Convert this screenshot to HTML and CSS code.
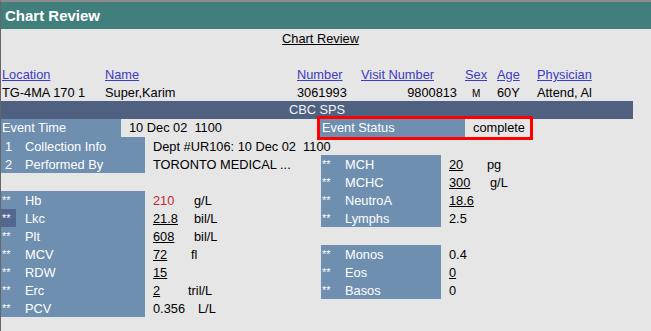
FILE: index.html
```html
<!DOCTYPE html>
<html>
<head>
<meta charset="utf-8">
<title>Chart Review</title>
<link rel="stylesheet" href="styles.css">
</head>
<body>
<div class="titlebar">Chart Review</div>
<div class="main">
  <div class="doc-row"><a class="doc-link" href="#">Chart Review</a></div>
  <div class="spacer"></div>
  <div class="patient">
    <a class="hd" href="#">Location</a>
    <a class="hd" href="#">Name</a>
    <a class="hd" href="#">Number</a>
    <a class="hd" href="#">Visit Number</a>
    <a class="hd" href="#">Sex</a>
    <a class="hd" href="#">Age</a>
    <a class="hd" href="#">Physician</a>
    <span class="pc">TG-4MA 170 1</span>
    <span class="pc">Super,Karim</span>
    <span class="pc">3061993</span>
    <span class="pc visit">9800813</span>
    <span class="pc sex"><span class="small">M</span></span>
    <span class="pc">60Y</span>
    <span class="pc">Attend, Al</span>
  </div>
  <div class="section-bar">CBC SPS</div>
  <div class="event-row">
    <div class="ev-label">Event Time</div>
    <div class="ev-value">10 Dec 02  1100</div>
    <div class="status">
      <div class="st-label">Event Status</div>
      <div class="st-value">complete</div>
    </div>
  </div>
  <div class="lab">
    <div class="lbl"><span class="mk num">1</span><span class="nm">Collection Info</span></div>
    <div class="vc span3">Dept #UR106: 10 Dec 02  1100</div>

    <div class="lbl"><span class="mk num">2</span><span class="nm">Performed By</span></div>
    <div class="vc">TORONTO MEDICAL ...</div>
    <div class="lbl"><span class="mk">**</span><span class="nm">MCH</span></div>
    <div class="vc"><span class="v v-pg u">20</span><span>pg</span></div>

    <div></div>
    <div></div>
    <div class="lbl"><span class="mk">**</span><span class="nm">MCHC</span></div>
    <div class="vc"><span class="v v-gl u">300</span><span>g/L</span></div>

    <div class="lbl"><span class="mk">**</span><span class="nm">Hb</span></div>
    <div class="vc"><span class="v v-gl hi">210</span><span>g/L</span></div>
    <div class="lbl"><span class="mk">**</span><span class="nm">NeutroA</span></div>
    <div class="vc"><span class="v u">18.6</span></div>

    <div class="lbl"><span class="mk sel">**</span><span class="nm">Lkc</span></div>
    <div class="vc"><span class="v v-gl u">21.8</span><span>bil/L</span></div>
    <div class="lbl"><span class="mk">**</span><span class="nm">Lymphs</span></div>
    <div class="vc"><span class="v">2.5</span></div>

    <div class="lbl"><span class="mk">**</span><span class="nm">Plt</span></div>
    <div class="vc"><span class="v v-gl u">608</span><span>bil/L</span></div>
    <div></div>
    <div></div>

    <div class="lbl"><span class="mk">**</span><span class="nm">MCV</span></div>
    <div class="vc"><span class="v v-fl u">72</span><span>fl</span></div>
    <div class="lbl"><span class="mk">**</span><span class="nm">Monos</span></div>
    <div class="vc"><span class="v">0.4</span></div>

    <div class="lbl"><span class="mk">**</span><span class="nm">RDW</span></div>
    <div class="vc"><span class="v u">15</span></div>
    <div class="lbl"><span class="mk">**</span><span class="nm">Eos</span></div>
    <div class="vc"><span class="v u">0</span></div>

    <div class="lbl"><span class="mk">**</span><span class="nm">Erc</span></div>
    <div class="vc"><span class="v v-tril u">2</span><span>tril/L</span></div>
    <div class="lbl"><span class="mk">**</span><span class="nm">Basos</span></div>
    <div class="vc"><span class="v">0</span></div>

    <div class="lbl"><span class="mk">**</span><span class="nm">PCV</span></div>
    <div class="vc"><span class="v v-ll">0.356</span><span>L/L</span></div>
    <div></div>
    <div></div>
  </div>
</div>
</body>
</html>
```
FILE: styles.css
```css
html {
  background: #e6e6e6;
}
body {
  margin: 0;
  min-height: 329px;
  border-top: 2px solid #8d8d8d;
  border-left: 1px solid #666666;
  background: #e6e6e6;
  font-family: "Liberation Sans", Arial, sans-serif;
  font-size: 12.8px;
  color: #000;
}
.titlebar {
  height: 27px;
  line-height: 28px;
  background: #417f7c;
  color: #ffffff;
  font-weight: bold;
  font-size: 15px;
  padding-left: 4px;
}
.main {
  width: 632px;
}
.doc-row {
  height: 18px;
  line-height: 19px;
  text-align: center;
  padding-left: 7px;
}
.doc-link {
  color: #000;
  text-decoration: underline;
}
.spacer {
  height: 18px;
}
.patient {
  display: grid;
  grid-template-columns: 103px 192px 64px 104px 32px 40px 1fr;
  grid-auto-rows: 18px;
  line-height: 19px;
}
.hd {
  color: #3c3cbf;
  text-decoration: underline;
  padding-left: 1px;
}
.pc {
  padding-left: 1px;
  white-space: nowrap;
}
.visit {
  text-align: right;
  padding-right: 7px;
}
.sex {
  padding-left: 8px;
}
.small {
  font-size: 10px;
}
.section-bar {
  height: 18px;
  line-height: 18px;
  background: #506080;
  color: #f4f4f4;
  text-align: center;
}
.event-row {
  display: flex;
  height: 18px;
  line-height: 18px;
}
.ev-label {
  width: 120px;
  background: #6f8fb0;
  color: #fff;
  padding-left: 1px;
  box-sizing: border-box;
}
.ev-value {
  width: 199px;
  padding-left: 8px;
  box-sizing: border-box;
  white-space: pre;
}
.status {
  display: flex;
  outline: 3px solid #ff0000;
}
.st-label {
  width: 145px;
  background: #6f8fb0;
  color: #fff;
  padding-left: 2px;
  box-sizing: border-box;
}
.st-value {
  width: 65px;
  padding-left: 8px;
  box-sizing: border-box;
}
.lab {
  display: grid;
  grid-template-columns: 144px 176px 120px 192px;
  grid-auto-rows: 18px;
  line-height: 19px;
}
.lbl {
  display: flex;
  background: #6f8fb0;
  color: #fff;
  white-space: nowrap;
}
.mk {
  width: 15px;
  padding-left: 1px;
  box-sizing: border-box;
  font-size: 11px;
}
.mk.num {
  padding-left: 4px;
  font-size: 12.8px;
}
.mk.sel {
  background: #536790;
}
.nm {
  margin-left: 9px;
}
.vc {
  display: flex;
  padding-left: 8px;
  white-space: pre;
}
.span3 {
  grid-column: span 3;
}
.v {
  flex: none;
}
.v-gl {
  width: 41px;
}
.v-fl {
  width: 38px;
}
.v-pg {
  width: 38px;
}
.v-tril {
  width: 35px;
}
.v-ll {
  width: 45px;
}
.u {
  text-decoration: underline;
}
.hi {
  color: #c0282d;
}
```
